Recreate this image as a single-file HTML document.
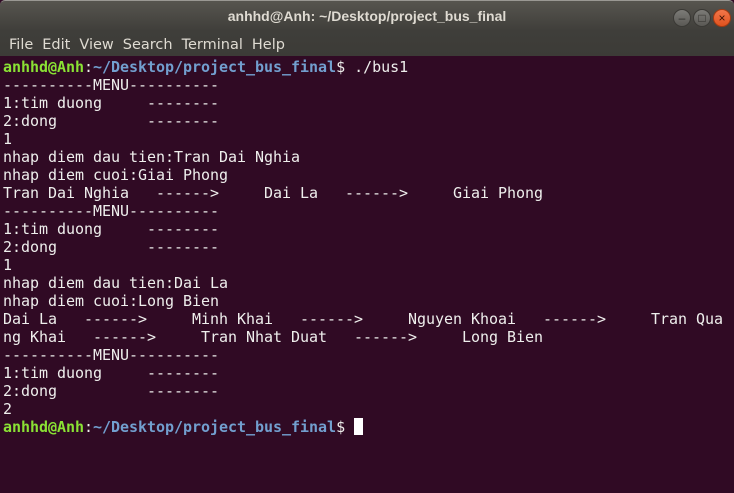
<!DOCTYPE html>
<html><head><style>
body{margin:0;width:734px;height:493px;overflow:hidden;background:#300a24;}
.tb{position:absolute;left:0;top:0;width:734px;height:56px;background:linear-gradient(#57554f,#3f3e3a 30px,#3c3b37);border-top:1px solid #9a9893;box-sizing:border-box;border-radius:5px 5px 0 0;}
.title{position:absolute;top:7px;width:734px;text-align:center;font:bold 14px "Liberation Sans",sans-serif;color:#dfdbd2;}
.menu{position:absolute;top:36px;left:9px;font:14.5px "DejaVu Sans","Liberation Sans",sans-serif;color:#dfdbd2;}
.menu span{margin-right:9px;}
.btn{position:absolute;top:8px;width:16px;height:16px;border-radius:50%;background:linear-gradient(#7c7b77,#5a5955);border:1px solid #3a3935;color:#2e2d2a;font:12px sans-serif;text-align:center;line-height:16px;}
pre{position:absolute;left:3px;top:58px;margin:0;font:15px/18px "DejaVu Sans Mono","Liberation Mono",monospace;color:#eeeeec;letter-spacing:-0.03px;}
.g{color:#8ae234;font-weight:bold}.b{color:#729fcf;font-weight:bold}
.cur{display:inline-block;width:9px;height:17px;background:#fff;vertical-align:-3px;}
</style></head><body>
<div class="tb"><div class="title">anhhd@Anh: ~/Desktop/project_bus_final</div>
<div class="menu"><span>File</span><span>Edit</span><span>View</span><span>Search</span><span>Terminal</span><span>Help</span></div>
<div class="btn" style="left:673px">&#8211;</div>
<div class="btn" style="left:693px">&#9633;</div>
<div class="btn" style="left:713px;background:linear-gradient(#f2764a,#e0521e);border-color:#a23a12;color:#3a1205">&#215;</div>
</div>
<pre><span class="g">anhhd@Anh</span>:<span class="b">~/Desktop/project_bus_final</span>$ ./bus1
----------MENU----------
1:tim duong     --------
2:dong          --------
1
nhap diem dau tien:Tran Dai Nghia
nhap diem cuoi:Giai Phong
Tran Dai Nghia   ------>     Dai La   ------>     Giai Phong
----------MENU----------
1:tim duong     --------
2:dong          --------
1
nhap diem dau tien:Dai La
nhap diem cuoi:Long Bien
Dai La   ------>     Minh Khai   ------>     Nguyen Khoai   ------>     Tran Qua
ng Khai   ------>     Tran Nhat Duat   ------>     Long Bien
----------MENU----------
1:tim duong     --------
2:dong          --------
2
<span class="g">anhhd@Anh</span>:<span class="b">~/Desktop/project_bus_final</span>$ <span class="cur"></span></pre>
</body></html>
